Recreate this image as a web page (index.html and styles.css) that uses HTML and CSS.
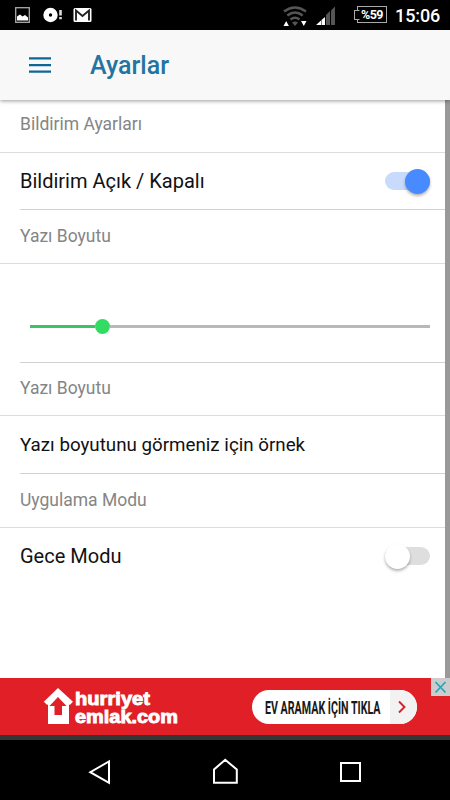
FILE: index.html
```html
<!DOCTYPE html>
<html lang="tr">
<head>
<meta charset="utf-8">
<title>Ayarlar</title>
<link rel="stylesheet" href="styles.css">
</head>
<body>
<div class="screen">
  <div class="status">
    <svg class="status-left" width="100" height="30" viewBox="0 0 100 30">
      <rect x="15.700" y="7.700" width="13.600" height="14.600" fill="none" stroke="#aaa" stroke-width="1.300"/>
      <path d="M17 20.500v-4l3-2 2.500 2 2.500-1.500 3 2.500v3z" fill="#fff"/>
      <circle cx="50.500" cy="15" r="7.200" fill="#fff"/><circle cx="50.500" cy="15" r="1.700" fill="#000"/>
      <path d="M59.200 10h2.600v5.500h-2.600zM59.200 17h2.600v2.300h-2.600z" fill="#ddd"/>
      <rect x="73.500" y="8" width="18" height="14" rx="1.500" fill="#fff"/>
      <path d="M76 20.500V10.500l6.500 5.500 6.500-5.500v10" fill="none" stroke="#222" stroke-width="1.900"/>
    </svg>
    <svg class="signals" width="56" height="30" viewBox="282 0 56 30">
      <g fill="none" stroke="#555" stroke-width="2.600">
        <path d="M284 11.500q11-8 22 0M287.300 15.500q7.700-6 15.400 0M290.500 19.500q4.500-3.500 9 0"/>
      </g>
      <path d="M292 22.500q3-2 6 0l-3 3.500z" fill="#555"/>
      <path d="M283.500 26l2.700-5 2.700 5zM301 21h5.500l-2.700 5z" fill="#fff"/>
      <path d="M316 25l5-4.500V25zM321.500 25v-5l3.500-3v8z" fill="#fff"/>
      <path d="M326 25V15l4-4v14zM331 25V10.500l4-4V25z" fill="#555"/>
    </svg>
    <div class="battery"><span>%59</span></div>
    <span class="clock">15:06</span>
  </div>
  <header class="bar">
    <svg class="menu" width="22" height="16" viewBox="0 0 22 16"><path d="M0 1.400h22M0 8.100h22M0 14.700h22" stroke="#0d6796" stroke-width="2.300"/></svg>
    <h1>Ayarlar</h1>
  </header>
  <main class="content">
    <div class="list">
      <div class="head h1st"><span>Bildirim Ayarları</span></div>
      <div class="item"><div class="inner"><span>Bildirim Açık / Kapalı</span><div class="toggle on"><b></b></div></div></div>
      <div class="head"><span>Yazı Boyutu</span></div>
      <div class="item range"><div class="inner"><div class="track"><div class="fill"></div><div class="knob"></div><div class="rest"></div></div></div></div>
      <div class="head h3rd"><span>Yazı Boyutu</span></div>
      <div class="item sample-item"><div class="inner sample"><span>Yazı boyutunu görmeniz için örnek</span></div></div>
      <div class="head"><span>Uygulama Modu</span></div>
      <div class="item last"><div class="inner"><span>Gece Modu</span><div class="toggle"><b></b></div></div></div>
    </div>
    <div class="scroll"></div>
  </main>
  <div class="ad">
    <svg class="house" width="30" height="38" viewBox="0 0 30 38">
      <path d="M15 1L.8 14.800 4.200 18 5 17.300V37H26V17.300l.8.700 3.200-3.200z" fill="#fff"/>
      <path d="M15 10l-8.500 9H11.500V28h7.500v-9h4.500z" fill="#e01f26"/>
    </svg>
    <svg class="brand" width="108" height="46" viewBox="0 0 108 46">
      <text x="1" y="21" textLength="75" lengthAdjust="spacingAndGlyphs">hurriyet</text>
      <text x="1" y="39" textLength="103" lengthAdjust="spacingAndGlyphs">emlak.com</text>
    </svg>
    <div class="cta">
      <svg width="120" height="34" viewBox="0 0 120 34"><text transform="translate(1 23.500) scale(.61 1)">EV ARAMAK İÇİN TIKLA</text></svg>
      <div class="arrow"><svg width="8" height="14" viewBox="0 0 8 14"><path d="M1 1.500L6.500 7 1 12.500" fill="none" stroke="#d3222a" stroke-width="1.900"/></svg></div>
    </div>
    <div class="close"><svg width="19" height="18" viewBox="0 0 19 18"><path d="M4.500 4l10 10.500M14.500 4l-10 10.500" stroke="#22a3bd" stroke-width="1.600"/></svg></div>
  </div>
  <div class="strip"></div>
  <nav class="nav">
    <svg width="450" height="60" viewBox="0 0 450 60" fill="none" stroke="#fff" stroke-width="2">
      <path d="M109 21.500v21.300L90.300 32.200z"/>
      <path d="M214 42.700V29.500l11.200-9.700 11.600 9.700v13.200z"/>
      <rect x="341" y="23" width="19" height="18"/>
    </svg>
  </nav>
</div>
</body>
</html>
```

FILE: styles.css
```css
* { box-sizing: border-box; }
body { margin: 0; background: #fff; font-family: Roboto, "Noto Sans", sans-serif; }
svg { display: block; flex: none; overflow: visible; }
.screen { width: 450px; height: 800px; display: flex; flex-direction: column; overflow: hidden; }
.status { height: 30px; background: #000; color: #fff; display: flex; align-items: center; flex: none; }
.signals { margin-left: 182px; }
.battery { position: relative; width: 30px; height: 17px; margin: 0 0 1px 19px; border: 1.500px solid #aaa; display: flex; align-items: center; justify-content: center; font-size: 12.500px; font-weight: 700; letter-spacing: -.6px; }
.battery::before { content: ""; position: absolute; left: -4px; top: 3px; width: 4px; height: 8px; border: 1px solid #aaa; border-right: 1px solid #000; background: #000; }
.clock { margin: 1px 0 0 8px; font-size: 18px; font-weight: 500; line-height: 24px; letter-spacing: -.1px; white-space: nowrap; }
.bar { position: relative; z-index: 1; height: 70px; flex: none; background: #f8f8f8; display: flex; align-items: center; padding-left: 29px; box-shadow: 0 1px 4px rgba(0,0,0,.4); }
.bar h1 { margin: 1px 0 0 39px; font-size: 25px; font-weight: 500; line-height: 30px; color: #2374a1; }
.content { height: 578px; flex: none; display: flex; }
.list { width: 445px; flex: none; }
.scroll { width: 5px; background: #999; }
.head { height: 54px; border-bottom: 1px solid #dcdcdc; padding: 0 0 2px 20px; display: flex; align-items: center; font-size: 17.500px; color: #858585; }
.h1st { height: 53px; padding-bottom: 4px; }
.h3rd { height: 53px; }
.item { height: 57px; padding-left: 20px; font-size: 20px; color: #111; }
.inner { height: 100%; border-bottom: 1px solid #d2d2d2; display: flex; align-items: center; justify-content: space-between; padding: 0 15px 0 0; }
.range { height: 99px; }
.range .inner { padding: 27px 15px 0 10px; }
.track { width: 100%; display: flex; align-items: center; }
.fill { width: 65px; height: 3px; background: #3cc365; }
.knob { width: 15px; height: 15px; border-radius: 50%; background: #32db64; }
.rest { flex: 1; height: 3px; background: #b8b8b8; }
.sample { font-size: 18.750px; }
.sample-item { height: 58px; }
.last .inner { border-bottom: 0; padding-bottom: 1px; }
.toggle { width: 45px; height: 18px; border-radius: 9px; background: #dedede; display: flex; align-items: center; }
.toggle b { width: 25px; height: 25px; flex: none; border-radius: 50%; background: #fff; box-shadow: 0 2px 3px rgba(0,0,0,.3); }
.toggle.on { background: #c8dbfc; justify-content: flex-end; }
.toggle.on b { background: #488aff; }
.ad { position: relative; height: 57px; flex: none; background: #e01f26; display: flex; align-items: center; padding-left: 43px; }
.house { margin-bottom: 1px; }
.brand { margin-left: 1px; }
.brand text { font: 700 18.500px "Liberation Sans", sans-serif; fill: #fff; stroke: #fff; stroke-width: .9px; }
.cta { width: 165px; height: 34px; margin: 1px 0 0 70px; border-radius: 17px; background: #fff; display: flex; padding-left: 12px; }
.cta text { font: 700 17.500px Roboto, sans-serif; fill: #181818; }
.arrow { flex: 1; margin-left: 6px; border-radius: 0 17px 17px 0; background: #f2f2f2; display: flex; align-items: center; padding-left: 8px; }
.close { position: absolute; right: 0; top: 0; width: 19px; height: 18px; background: #ccc; }
.strip { height: 5px; flex: none; background: #363636; }
.nav { height: 60px; flex: none; background: #000; }
```
